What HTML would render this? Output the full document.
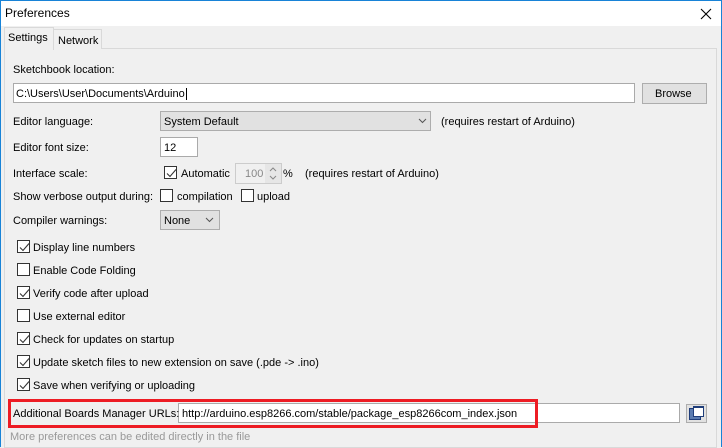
<!DOCTYPE html><html><head><style>
*{margin:0;padding:0;box-sizing:border-box}
body{width:722px;height:447px;overflow:hidden;background:#f0f0f0;font-family:"Liberation Sans",sans-serif;font-size:11px;color:#000;position:relative}
.a{position:absolute;white-space:nowrap}
.t{line-height:14px;margin-top:1px}
.cb{position:absolute;width:13px;height:13px;border:1px solid #333;background:#fff}
.cb svg{position:absolute;left:1px;top:1px}
.in{position:absolute;background:#fff;border:1px solid #aaa}
</style></head><body>
<div class="a" style="left:0;top:0;width:722px;height:447px;border:1px solid #1883d7;border-bottom:none"></div>
<div class="a" style="left:1px;top:1px;width:720px;height:25px;background:#fff"></div>
<div class="a t" style="left:5px;top:5px;font-size:12px">Preferences</div>
<svg class="a" style="left:700px;top:8px" width="12" height="12"><path d="M1 1L11 11M11 1L1 11" stroke="#000" stroke-width="1.1"/></svg>
<div class="a" style="left:4px;top:48px;width:713px;height:400px;border:1px solid #d9d9d9;background:#f0f0f0"></div>
<div class="a" style="left:53px;top:29px;width:49px;height:20px;border:1px solid #d9d9d9;border-bottom:none;background:#f0f0f0"></div>
<div class="a t" style="left:58px;top:33px">Network</div>
<div class="a" style="left:4px;top:27px;width:50px;height:23px;border:1px solid #d9d9d9;border-bottom:none;background:#f0f0f0"></div>
<div class="a t" style="left:8px;top:30px">Settings</div>

<div class="a t" style="left:13px;top:62px">Sketchbook location:</div>
<div class="in" style="left:13px;top:83px;width:622px;height:20px"></div>
<div class="a t" style="left:16px;top:86px">C:\Users\User\Documents\Arduino<span style="border-left:1px solid #000;margin-left:1px"></span></div>
<div class="a" style="left:642px;top:83px;width:65px;height:21px;background:#e1e1e1;border:1px solid #adadad"></div>
<div class="a t" style="left:655px;top:86px">Browse</div>

<div class="a t" style="left:13px;top:114px">Editor language:</div>
<div class="a" style="left:160px;top:111px;width:271px;height:20px;background:#e1e1e1;border:1px solid #adadad"></div>
<div class="a t" style="left:164px;top:114px">System Default</div>
<svg class="a" style="left:418px;top:118px" width="9" height="6"><path d="M1 1L4.5 4.5L8 1" stroke="#555" fill="none"/></svg>
<div class="a t" style="left:441px;top:114px">(requires restart of Arduino)</div>

<div class="a t" style="left:13px;top:140px">Editor font size:</div>
<div class="in" style="left:160px;top:137px;width:38px;height:20px"></div>
<div class="a t" style="left:164px;top:140px">12</div>

<div class="a t" style="left:13px;top:166px">Interface scale:</div>
<div class="cb" style="left:164px;top:166px"><svg width="11" height="11"><path d="M1 5.5L4 8.5L10 1.5" stroke="#333" fill="none" stroke-width="1.1"/></svg></div>
<div class="a t" style="left:181px;top:166px">Automatic</div>
<div class="a" style="left:235px;top:163px;width:47px;height:21px;border:1px solid #ccc;background:#f0f0f0"></div>
<div class="a t" style="left:245px;top:166px;color:#888">100</div>
<div class="a" style="left:265px;top:164px;width:16px;height:19px;background:#e6e6e6"></div>
<svg class="a" style="left:269px;top:166px" width="8" height="15"><path d="M1 5L4 2L7 5M1 10L4 13L7 10" stroke="#888" fill="none"/></svg>
<div class="a t" style="left:283px;top:166px">%</div>
<div class="a t" style="left:305px;top:166px">(requires restart of Arduino)</div>

<div class="a t" style="left:13px;top:189px">Show verbose output during:</div>
<div class="cb" style="left:160px;top:189px"></div>
<div class="a t" style="left:177px;top:189px">compilation</div>
<div class="cb" style="left:241px;top:189px"></div>
<div class="a t" style="left:257px;top:189px">upload</div>

<div class="a t" style="left:13px;top:213px">Compiler warnings:</div>
<div class="a" style="left:160px;top:210px;width:60px;height:20px;background:#e1e1e1;border:1px solid #adadad"></div>
<div class="a t" style="left:164px;top:213px">None</div>
<svg class="a" style="left:205px;top:217px" width="9" height="6"><path d="M1 1L4.5 4.5L8 1" stroke="#555" fill="none"/></svg>

<div class="cb" style="left:17px;top:240px"><svg width="11" height="11"><path d="M1 5.5L4 8.5L10 1.5" stroke="#333" fill="none" stroke-width="1.1"/></svg></div>
<div class="a t" style="left:33px;top:240px">Display line numbers</div>
<div class="cb" style="left:17px;top:263px"></div>
<div class="a t" style="left:33px;top:263px">Enable Code Folding</div>
<div class="cb" style="left:17px;top:286px"><svg width="11" height="11"><path d="M1 5.5L4 8.5L10 1.5" stroke="#333" fill="none" stroke-width="1.1"/></svg></div>
<div class="a t" style="left:33px;top:286px">Verify code after upload</div>
<div class="cb" style="left:17px;top:309px"></div>
<div class="a t" style="left:33px;top:309px">Use external editor</div>
<div class="cb" style="left:17px;top:332px"><svg width="11" height="11"><path d="M1 5.5L4 8.5L10 1.5" stroke="#333" fill="none" stroke-width="1.1"/></svg></div>
<div class="a t" style="left:33px;top:332px">Check for updates on startup</div>
<div class="cb" style="left:17px;top:355px"><svg width="11" height="11"><path d="M1 5.5L4 8.5L10 1.5" stroke="#333" fill="none" stroke-width="1.1"/></svg></div>
<div class="a t" style="left:33px;top:355px">Update sketch files to new extension on save (.pde -&gt; .ino)</div>
<div class="cb" style="left:17px;top:378px"><svg width="11" height="11"><path d="M1 5.5L4 8.5L10 1.5" stroke="#333" fill="none" stroke-width="1.1"/></svg></div>
<div class="a t" style="left:33px;top:378px">Save when verifying or uploading</div>

<div class="in" style="left:178px;top:403px;width:502px;height:20px"></div>
<div class="a t" style="left:13px;top:406px">Additional Boards Manager URLs:</div>
<div class="a t" style="left:182px;top:406px">http://arduino.esp8266.com/stable/package_esp8266com_index.json</div>
<div class="a" style="left:8px;top:399px;width:530px;height:29px;border:3px solid #ed1c24"></div>
<div class="a" style="left:686px;top:404px;width:21px;height:19px;background:#e1e1e1;border:1px solid #adadad"></div>
<div class="a" style="left:689px;top:408px;width:12px;height:12px;background:#5b7bb0;border:1px solid #1f3d7a"></div>
<div class="a" style="left:693px;top:406px;width:11px;height:11px;background:#fff;border:1px solid #1f3d7a;border-top-width:2px"></div>

<div class="a t" style="left:10px;top:429px;color:#999">More preferences can be edited directly in the file</div>
</body></html>
